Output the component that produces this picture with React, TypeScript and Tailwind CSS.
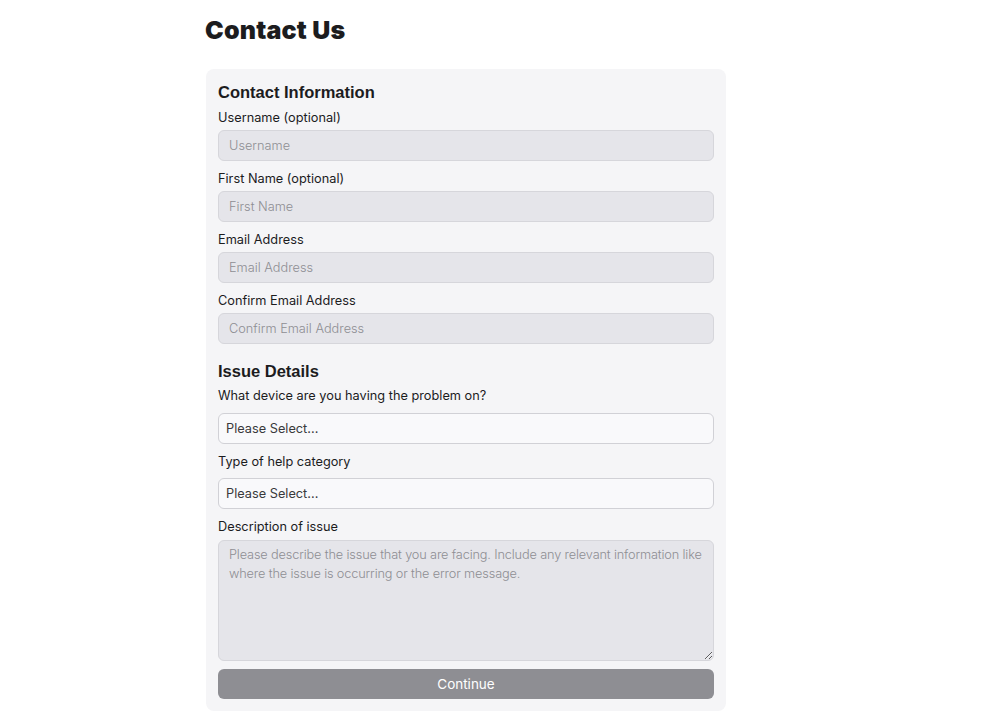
import React from "react";

const labelCls = "block text-[12.75px] leading-[18px] text-[#1c1c1e] font-['Inter',sans-serif]";
const inputCls =
  "block w-full h-[31px] rounded-[6px] border border-[#d6d6db] bg-[#e5e5ea] px-[10px] text-[12.75px] font-light text-[#1c1c1e] placeholder:text-[#8e8e93] outline-none font-['Inter',sans-serif]";
const selectCls =
  "flex items-center w-full h-[31px] rounded-[6px] border border-[#d1d1d6] bg-[#f9f9fb] px-[7px] text-[12.75px] text-[#3a3a3c] font-['Inter',sans-serif]";

function Field({ label, placeholder }: { label: string; placeholder: string }) {
  return (
    <div className="mt-[8px]">
      <label className={labelCls + " translate-y-[1px]"}>{label}</label>
      <input className={inputCls + " mt-[4px]"} placeholder={placeholder} />
    </div>
  );
}

export default function App() {
  return (
    <div className="min-h-[711px] bg-white">
      <div className="ml-[205px] w-[521px]">
        <h1 className="pt-[14px] text-[25px] leading-[32px] font-black text-[#1c1c1e] font-['Inter',sans-serif] tracking-[0.2px]">
          Contact Us
        </h1>
        <div className="mt-[23px] ml-[1px] rounded-[8px] bg-[#f5f5f7] px-[12px] pt-[12px] pb-[12px]">
          <h2 className="text-[16.5px] leading-[22px] font-bold text-[#1c1c1e] font-['Liberation_Sans',sans-serif]">
            Contact Information
          </h2>
          <div className="-mt-[3px]">
            <Field label="Username (optional)" placeholder="Username" />
            <Field label="First Name (optional)" placeholder="First Name" />
            <Field label="Email Address" placeholder="Email Address" />
            <Field label="Confirm Email Address" placeholder="Confirm Email Address" />
          </div>
          <h2 className="mt-[16px] text-[16.5px] leading-[22px] font-bold text-[#1c1c1e] font-['Liberation_Sans',sans-serif]">
            Issue Details
          </h2>
          <div className="mt-[5px]">
            <label className={labelCls}>What device are you having the problem on?</label>
            <div className={selectCls + " mt-[8px]"}>Please Select...</div>
          </div>
          <div className="mt-[9px]">
            <label className={labelCls}>Type of help category</label>
            <div className={selectCls + " mt-[7px]"}>Please Select...</div>
          </div>
          <div className="mt-[9px]">
            <label className={labelCls}>Description of issue</label>
            <textarea
              className="mt-[4px] block w-full h-[121px] rounded-[6px] border border-[#d6d6db] bg-[#e5e5ea] px-[10px] py-[4px] text-[12.75px] leading-[19px] font-light tracking-[-0.15px] text-[#1c1c1e] placeholder:text-[#8e8e93] outline-none font-['Inter',sans-serif] resize-y"
              placeholder="Please describe the issue that you are facing. Include any relevant information like where the issue is occurring or the error message."
            />
          </div>
          <button className="mt-[8px] block w-full h-[30px] rounded-[6px] bg-[#8e8e93] text-[13.5px] text-white font-['Inter',sans-serif]">
            Continue
          </button>
        </div>
      </div>
    </div>
  );
}
